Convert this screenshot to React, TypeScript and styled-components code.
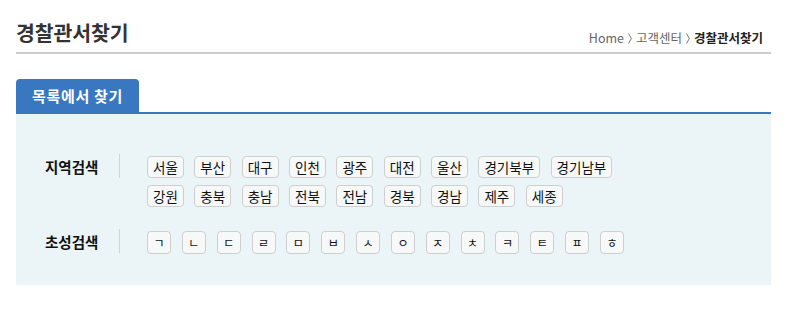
import React from "react";
import styled, { createGlobalStyle } from "styled-components";

const GlobalStyle = createGlobalStyle`
  html, body { margin: 0; padding: 0; background: #fff; }
  body { font-family: "Noto Sans CJK KR", "Noto Sans", sans-serif; color: #222; }
  * { box-sizing: border-box; }
`;

const Page = styled.div`
  width: 755px;
  margin-left: 16px;
`;

const Header = styled.div`
  display: flex;
  justify-content: space-between;
  align-items: flex-end;
  padding-top: 20px;
  padding-bottom: 8px;
  border-bottom: 2px solid #cccccc;
`;

const Title = styled.h2`
  margin: 0;
  font-size: 20.5px;
  line-height: 24px;
  font-weight: 700;
  letter-spacing: -0.1px;
  color: #333;
`;

const Breadcrumb = styled.div`
  display: flex;
  align-items: center;
  gap: 4px;
  padding-right: 8px;
  margin-bottom: -3px;
  font-size: 12.5px;
  line-height: 18px;
  color: #666;
`;

const Crumb = styled.span<{ $current?: boolean }>`
  font-weight: ${(p) => (p.$current ? 700 : 400)};
  color: ${(p) => (p.$current ? "#222" : "#666")};
`;

const SepIcon = styled.svg`
  display: block;
  width: 4px;
  height: 11px;
  margin-top: 1px;
`;

const Sep = () => (
  <SepIcon viewBox="0 0 4 11" aria-hidden="true">
    <path d="M0.6 0.5 L3.3 5.5 L0.6 10.5" fill="none" stroke="#666" strokeWidth="0.9" />
  </SepIcon>
);

const Tabs = styled.div`
  margin-top: 25px;
  display: flex;
  border-bottom: 2px solid #3a77c1;
`;

const Tab = styled.div`
  height: 33px;
  padding: 0 16px;
  display: flex;
  align-items: center;
  background: #3a77c1;
  color: #fff;
  font-size: 15px;
  font-weight: 700;
  letter-spacing: 0.7px;
  border-radius: 4px 4px 0 0;
`;

const Panel = styled.div`
  background: #ebf4f7;
  padding: 42px 29px 31px;
  display: flex;
  flex-direction: column;
  gap: 24px;
`;

const Row = styled.div`
  display: flex;
  align-items: flex-start;
`;

const Label = styled.div`
  width: 74px;
  height: 24px;
  display: flex;
  align-items: center;
  font-size: 14.5px;
  font-weight: 700;
  color: #111;
  margin-top: -2px;
`;

const Divider = styled.div`
  width: 1px;
  height: 24px;
  background: #cfd4d7;
  margin-top: -2px;
  margin-right: 27px;
`;

const Buttons = styled.div<{ $gap: number; $width: number }>`
  display: flex;
  flex-wrap: wrap;
  column-gap: ${(p) => p.$gap}px;
  row-gap: 7px;
  width: ${(p) => p.$width}px;
`;

const RegionButton = styled.button`
  height: 22px;
  padding: 0 5px;
  border: 1px solid #cfcfcf;
  border-radius: 4px;
  background: #f7f8f8;
  font-family: "Noto Sans CJK KR", sans-serif;
  font-size: 13.5px;
  line-height: 20px;
  color: #111;
  cursor: pointer;
`;

const JamoButton = styled.button`
  width: 24px;
  height: 23px;
  padding: 0;
  border: 1px solid #cfcfcf;
  border-radius: 4px;
  background: #f7f8f8;
  font-family: "Noto Sans CJK KR", sans-serif;
  font-size: 12px;
  line-height: 21px;
  color: #111;
  cursor: pointer;
`;

const regions = [
  "서울", "부산", "대구", "인천", "광주", "대전", "울산", "경기북부", "경기남부",
  "강원", "충북", "충남", "전북", "전남", "경북", "경남", "제주", "세종",
];

const jamo = ["ㄱ", "ㄴ", "ㄷ", "ㄹ", "ㅁ", "ㅂ", "ㅅ", "ㅇ", "ㅈ", "ㅊ", "ㅋ", "ㅌ", "ㅍ", "ㅎ"];

export default function App() {
  return (
    <>
      <GlobalStyle />
      <Page>
        <Header>
          <Title>경찰관서찾기</Title>
          <Breadcrumb>
            <Crumb>Home</Crumb>
            <Sep />
            <Crumb>고객센터</Crumb>
            <Sep />
            <Crumb $current>경찰관서찾기</Crumb>
          </Breadcrumb>
        </Header>
        <Tabs>
          <Tab>목록에서 찾기</Tab>
        </Tabs>
        <Panel>
          <Row>
            <Label>지역검색</Label>
            <Divider />
            <Buttons $gap={10.5} $width={480}>
              {regions.map((r) => (
                <RegionButton key={r}>{r}</RegionButton>
              ))}
            </Buttons>
          </Row>
          <Row>
            <Label>초성검색</Label>
            <Divider />
            <Buttons $gap={10.85} $width={520}>
              {jamo.map((j) => (
                <JamoButton key={j}>{j}</JamoButton>
              ))}
            </Buttons>
          </Row>
        </Panel>
      </Page>
    </>
  );
}
